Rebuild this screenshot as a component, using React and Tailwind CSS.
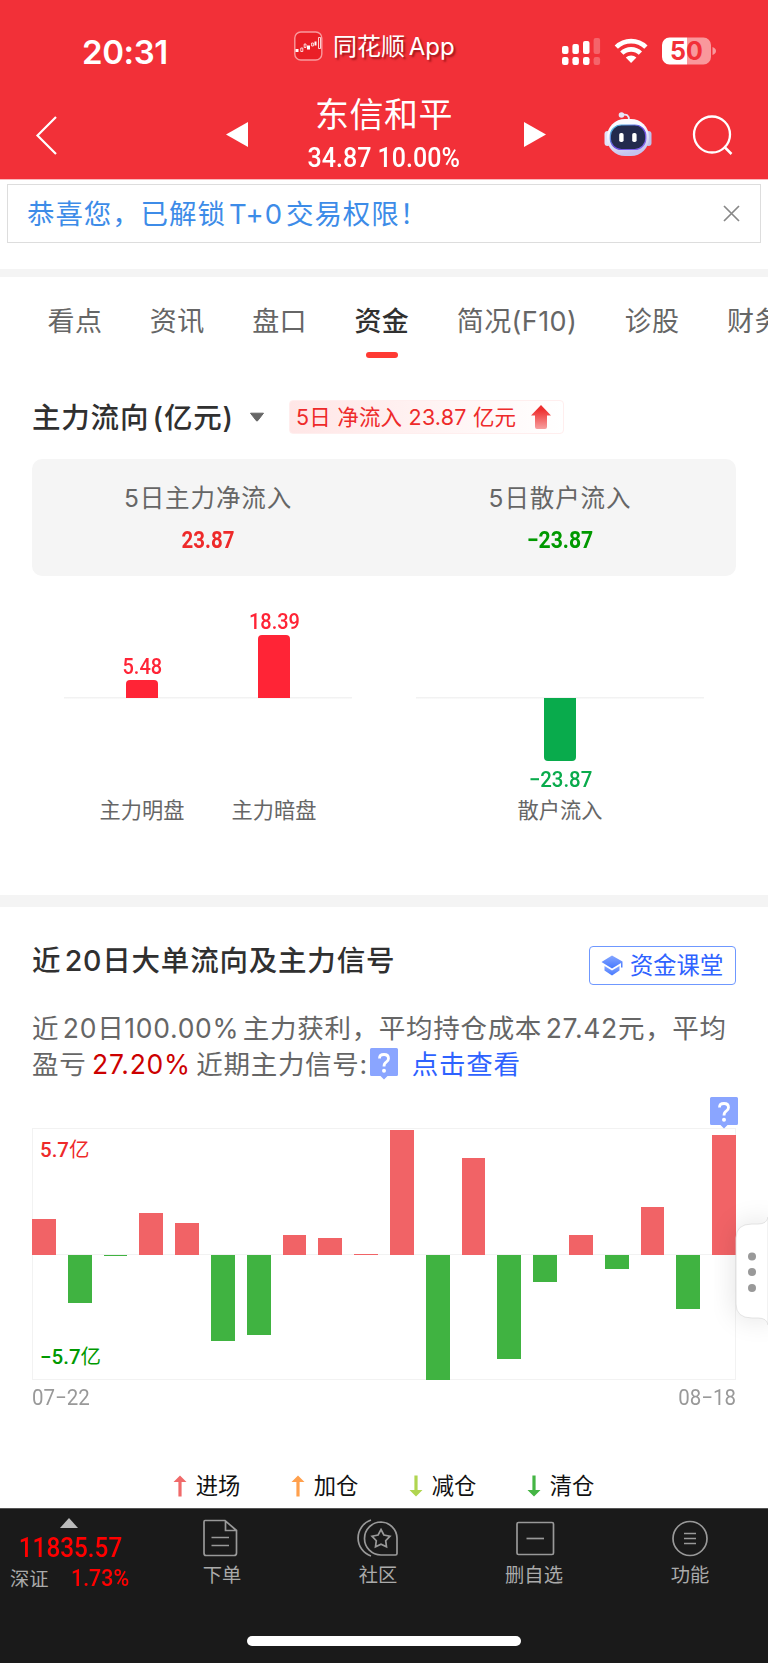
import React, { useState } from 'react';

const tabs = ['看点', '资讯', '盘口', '资金', '简况(F10)', '诊股', '财务'];

// height in px from the zero line, negative = outflow
const flows = [
    35.5, -48.5, -1, 41.5, 31.5, -86.5, -80.5, 20, 17, 0.6,
    125, -125.5, 96.5, -104, -27, 20, -14, 48, -54.5, 119.5,
];

const legend = [
    { label: '进场', color: '#f06a6a', up: true },
    { label: '加仓', color: '#ffa04d', up: true },
    { label: '减仓', color: '#b0d550', up: false },
    { label: '清仓', color: '#44b544', up: false },
];

const StatusBar = () => (
    <div className="flex h-[90px] items-start">
        <div className="w-[294px] pl-[82px] pt-[35px] text-[33px] font-semibold leading-[34px] tracking-[-0.4px]">20:31</div>
        <div className="flex w-[268px] items-center pt-[29px]">
            <svg width="29" height="30" viewBox="0 0 29 30" className="shrink-0">
                <rect x="0.8" y="1" width="27" height="28" rx="6" fill="#ea1f26" stroke="#f99a9d" strokeWidth="1.4" />
                <path d="M1.5 18h3v3h-3zM13 14.5h3v4h-3zM20.5 10.5h2v4h-2z" fill="#fff" />
                <path d="M6.8 17h2v3.5h-2zM10.2 13h1.8v3.5h-1.8zM17.6 12h1.8v3h-1.8zM24.5 6.5h2v11h-2z" fill="none" stroke="#fff" strokeWidth="0.8" />
            </svg>
            <span className="ml-[10px] mt-[3px] whitespace-nowrap text-[24px] leading-[30px] [text-shadow:2px_2px_2px_rgba(90,0,0,0.55)] [word-spacing:-3px]">
                同花顺 App
            </span>
        </div>
        <svg width="160" height="30" viewBox="0 0 160 30" className="mt-[36px]">
            <g fill="#fff">
                <rect x="0" y="10" width="6.5" height="8" rx="2" />
                <rect x="10.4" y="8" width="6.5" height="10" rx="2" />
                <rect x="21" y="5" width="6.5" height="13" rx="2" />
                <rect x="0" y="21" width="6.5" height="8" rx="2.2" />
                <rect x="10.4" y="21" width="6.5" height="8" rx="2.2" />
                <rect x="21" y="21" width="6.5" height="8" rx="2.2" />
                <rect x="31.6" y="2" width="6.5" height="16" rx="2" opacity="0.25" />
                <rect x="31.6" y="21" width="6.5" height="8" rx="2.2" opacity="0.25" />
            </g>
            <g fill="none" stroke="#fff" strokeWidth="4.6">
                <path d="M54.3 11.2 A21 21 0 0 1 83.9 11.2" />
                <path d="M59.8 17.2 A13.2 13.2 0 0 1 78.4 17.2" />
            </g>
            <path d="M69.1 27 L63.8 21.6 A8 8 0 0 1 74.4 21.6 Z" fill="#fff" />
            <path d="M108 1.5 h-0.5 a7.5 7.5 0 0 0 -7.5 7.5 v12 a7.5 7.5 0 0 0 7.5 7.500 H125 V1.5 Z" fill="#fff" />
            <path d="M125 1.5 h16.5 a7.5 7.5 0 0 1 7.5 7.5 v12 a7.5 7.5 0 0 1 -7.5 7.5 H125 Z" fill="#f9989c" />
            <path d="M150.5 11 q3.5 1.5 3.5 4 q0 2.5 -3.5 4 Z" fill="#f9989c" />
            <text x="124.5" y="24" textAnchor="middle" fontFamily="Inter" fontWeight="700" fontSize="25" fill="#f23038">50</text>
        </svg>
    </div>
);

const Robot = () => (
    <svg width="48" height="46" viewBox="0 0 48 46">
        <defs>
            <linearGradient id="head" x1="0" y1="0" x2="0.3" y2="1">
                <stop offset="0.4" stopColor="#fafaff" />
                <stop offset="1" stopColor="#c4c4ee" />
            </linearGradient>
            <linearGradient id="rim" x1="0" y1="0" x2="1" y2="1">
                <stop offset="0" stopColor="#4fd0e0" />
                <stop offset="0.5" stopColor="#6a4be0" />
                <stop offset="1" stopColor="#8a6bf0" />
            </linearGradient>
        </defs>
        <path d="M18 4 Q25 2 25 9" fill="none" stroke="#e6e6f8" strokeWidth="1.8" />
        <circle cx="17.5" cy="4" r="2.8" fill="#e6e6f8" />
        <rect x="0.5" y="20" width="6" height="15" rx="3" fill="#e2e2f8" />
        <rect x="41.5" y="20" width="6" height="15" rx="3" fill="#c0c2ec" />
        <rect x="3" y="8" width="42" height="37" rx="18" fill="url(#head)" />
        <rect x="6.3" y="14" width="35.5" height="24.5" rx="11" fill="#232a4d" stroke="url(#rim)" strokeWidth="1.2" />
        <rect x="15.2" y="22" width="4.4" height="9" rx="1.8" fill="#fff" />
        <rect x="28.2" y="22" width="4.4" height="9" rx="1.8" fill="#fff" />
    </svg>
);

const Header = () => (
    <header className="h-[180px] border-b border-[#f9b9bc] bg-[#f23038] text-white">
        <StatusBar />
        <div className="flex h-[89px] items-start">
            <svg width="226" height="89" viewBox="0 0 226 89">
                <path d="M56 27 L37.5 45.5 L56 64" fill="none" stroke="#fff" strokeWidth="2.2" />
            </svg>
            <svg width="22" height="89" viewBox="0 0 22 89">
                <path d="M0 44.5 L22 32 V57 Z" fill="#fff" />
            </svg>
            <div className="flex w-[272px] flex-col items-center">
                <div className="mt-[3px] text-[34px] leading-[44px] tracking-[0.5px]">东信和平</div>
                <div className="mt-[5px] scale-x-[0.91] whitespace-nowrap font-['Roboto'] text-[27.5px] font-medium leading-[32px]">34.87 10.00%</div>
            </div>
            <svg width="22" height="89" viewBox="0 0 22 89" className="ml-[4px]">
                <path d="M22 44.5 L0 32 V57 Z" fill="#fff" />
            </svg>
            <div className="ml-[58px] mt-[21px]"><Robot /></div>
            <svg width="44" height="44" viewBox="0 0 44 44" className="ml-[38px] mt-[23px]">
                <circle cx="22" cy="21.5" r="18" fill="none" stroke="#fff" strokeWidth="2.3" />
                <path d="M34 33.5 L41.5 41" stroke="#fff" strokeWidth="2.5" />
            </svg>
        </div>
    </header>
);

const Caret = ({ className }) => (
    <svg width="16" height="11" viewBox="0 0 16 11" className={className}>
        <path d="M1.5 1.2 H14.5 L8.7 8.7 Q8 9.5 7.3 8.7 Z" fill="#666" stroke="#666" strokeLinejoin="round" />
    </svg>
);

const Ask = ({ className }) => (
    <svg width="28" height="32" viewBox="0 0 28 32" className={className}>
        <path d="M1.5 0 H26.5 Q28 0 28 1.5 V26.5 Q28 28 26.5 28 H17.5 L14 31.5 L10.5 28 H1.5 Q0 28 0 26.5 V1.5 Q0 0 1.5 0 Z" fill="#8aa5ff" />
        <path d="M9.5 10.5 Q9.5 6.5 14 6.5 Q18.5 6.5 18.5 10.5 Q18.5 12.7 16.2 14.2 Q14 15.6 14 18.5" fill="none" stroke="#fff" strokeWidth="2.8" />
        <circle cx="14" cy="22.7" r="2" fill="#fff" />
    </svg>
);

const Signal = ({ color, up }) => (
    <svg width="14" height="22" viewBox="0 0 14 22" className={up ? '' : 'rotate-180'}>
        <path d="M7 0.5 L13.5 7 H8.6 V21.5 H5.4 V7 H0.5 Z" fill={color} />
    </svg>
);

const SmallBar = ({ value, label, height, down }) => (
    <div className="flex w-[132px] flex-col items-center">
        <div className="flex h-[98px] flex-col items-center justify-end">
            {!down && (
                <>
                    <span className="scale-x-[0.93] font-['Roboto'] text-[21.5px] font-medium leading-[26px] text-[#ff2436]">{value}</span>
                    <div className="w-[32px] rounded-t-[4px] bg-[#ff2436]" style={{ height }} />
                </>
            )}
        </div>
        <div className="flex h-[96px] flex-col items-center">
            {down && (
                <>
                    <div className="w-[32px] rounded-b-[4px] bg-[#09ab4c]" style={{ height }} />
                    <span className="mt-[5px] scale-x-[0.95] whitespace-nowrap font-['Roboto'] text-[21.5px] font-medium leading-[27px] text-[#09ab4c]">{value}</span>
                </>
            )}
        </div>
        <div className="text-[21.2px] leading-[32px] text-[#666]">{label}</div>
    </div>
);

const MainFlow = () => (
    <section className="h-[537px] px-8 pt-[42px]">
        <div className="flex h-[34px] items-center">
            <h2 className="mt-[2px] w-[202px] whitespace-nowrap text-[28.5px] font-medium leading-[34px] tracking-[0.8px] text-[#303030] [word-spacing:-5px]">主力流向 (亿元)</h2>
            <Caret className="ml-[15px]" />
            <div className="ml-[24px] flex h-[34px] w-[275px] items-center rounded-[4px] border border-[#ffeeee] bg-gradient-to-r from-[#ffe6e6] to-white pl-[6px] text-[#ee2a2a]">
                <span className="w-[235px] whitespace-nowrap text-[21.5px] tracking-[0.2px]">5日 净流入 23.87 亿元</span>
                <svg width="20" height="24" viewBox="0 0 20 24">
                    <defs>
                        <linearGradient id="inflow" x1="0" y1="0" x2="0" y2="1">
                            <stop offset="0.2" stopColor="#ee3030" />
                            <stop offset="1" stopColor="#f7a0a0" />
                        </linearGradient>
                    </defs>
                    <path d="M10 0 L20 10.5 H16 V22 Q16 24 14 24 H6 Q4 24 4 22 V10.5 H0 Z" fill="url(#inflow)" />
                </svg>
            </div>
        </div>
        <div className="mt-[25px] grid h-[117px] grid-cols-2 rounded-[10px] bg-[#f5f5f5] pt-[22px] text-center">
            <div>
                <div className="text-[24.5px] leading-[34px] tracking-[0.9px] text-[#666]">5日主力净流入</div>
                <div className="mt-[10px] scale-x-[0.87] font-['Roboto'] text-[23.5px] font-bold leading-[30px] text-[#ee2a2a]">23.87</div>
            </div>
            <div>
                <div className="text-[24.5px] leading-[34px] tracking-[0.9px] text-[#666]">5日散户流入</div>
                <div className="mt-[10px] scale-x-[0.9] font-['Roboto'] text-[23.5px] font-bold leading-[30px] text-[#009900]">−23.87</div>
            </div>
        </div>
        <div className="mt-[24px] grid grid-cols-2">
            <div className="mx-8 flex justify-center bg-[linear-gradient(#f2f2f2,#f2f2f2)] bg-[length:100%_1.5px] bg-[position:0_97px] bg-no-repeat">
                <SmallBar value="5.48" label="主力明盘" height={18.5} />
                <SmallBar value="18.39" label="主力暗盘" height={63} />
            </div>
            <div className="mx-8 flex justify-center bg-[linear-gradient(#f2f2f2,#f2f2f2)] bg-[length:100%_1.5px] bg-[position:0_97px] bg-no-repeat">
                <SmallBar value="−23.87" label="散户流入" height={62.5} down />
            </div>
        </div>
    </section>
);

const FlowChart = () => (
    <div className="mt-[46px]">
        <div className="relative h-[252px] border border-[#f2f2f2]">
            <div className="-mx-px flex h-[251px] items-stretch justify-between">
                {flows.map((v, i) => (
                    <div key={i} className="flex w-[23.8px] flex-col">
                        <div className="flex h-[125.5px] flex-col justify-end">
                            {v > 0 && <div className="bg-[#f16366]" style={{ height: v }} />}
                        </div>
                        {v < 0 && <div className="bg-[#40b341]" style={{ height: -v }} />}
                    </div>
                ))}
            </div>
            <div className="absolute left-0 top-[125px] -z-10 h-px w-full bg-[#f2f2f2]" />
            <div className="absolute left-[7px] top-[6px] whitespace-nowrap text-[20.5px] leading-[30px] text-[#ee2a2a]">
                <span className="font-['Roboto'] font-medium">5.7</span>亿
            </div>
            <div className="absolute left-[7px] top-[213px] whitespace-nowrap text-[20.5px] leading-[30px] text-[#009900]">
                <span className="font-['Roboto'] font-medium">−5.7</span>亿
            </div>
            <Ask className="absolute -top-[32px] right-[-3px]" />
        </div>
        <div className="mt-[3px] flex justify-between font-['Roboto'] text-[22px] leading-[30px] text-[#999]">
            <span className="origin-left scale-x-[0.93]">07−22</span>
            <span className="origin-right scale-x-[0.93]">08−18</span>
        </div>
    </div>
);

const BigOrders = () => (
    <section className="h-[601px] px-8 pt-[39px]">
        <div className="flex h-[39px] justify-between">
            <h2 className="-mt-px whitespace-nowrap text-[28.5px] font-medium leading-[32px] tracking-[0.8px] text-[#303030] [word-spacing:-5px]">近 20日大单流向及主力信号</h2>
            <button className="flex w-[147px] items-center rounded-[4px] border-[1.5px] border-[#6f98ff] pl-[11px] text-[23.3px] text-[#2e62ff]">
                <svg width="22" height="21" viewBox="0 0 22 21" className="mr-[7px] shrink-0">
                    <defs>
                        <linearGradient id="cap" x1="0" y1="0" x2="0" y2="1">
                            <stop offset="0" stopColor="#86a6ff" />
                            <stop offset="1" stopColor="#4478ff" />
                        </linearGradient>
                    </defs>
                    <path d="M11 0.5 L21.5 6.5 V12.5 H20 V8 L11 13.5 L0.5 7 Z" fill="url(#cap)" />
                    <path d="M3.5 11 L11 15.5 L18.5 11 V15.5 L11 20.5 L3.5 15.5 Z" fill="url(#cap)" />
                </svg>
                <span className="mt-px whitespace-nowrap">资金课堂</span>
            </button>
        </div>
        <div className="mt-[26px] whitespace-nowrap text-[26.5px] leading-[35.5px] tracking-[0.7px] text-[#666]">
            <p className="[word-spacing:-4.5px]">近 20日100.00% 主力获利，平均持仓成本 27.42元，平均</p>
            <p className="flex [word-spacing:-2.5px]">
                <span>盈亏 <span className="text-[#cc0000]">27.20%</span> 近期主力信号:</span>
                <Ask className="ml-[2px] mt-px" />
                <span className="ml-[14px] text-[#2e62ff]">点击查看</span>
            </p>
        </div>
        <FlowChart />
        <div className="mt-[57px] flex justify-center pr-px">
            {legend.map((item) => (
                <div key={item.label} className="flex w-[118px] items-center justify-center text-[22.3px] leading-[32px] text-[#111]">
                    <Signal color={item.color} up={item.up} />
                    <span className="ml-[9px]">{item.label}</span>
                </div>
            ))}
        </div>
    </section>
);

// floating handle on the right edge
const SideHandle = () => (
    <svg width="100" height="200" viewBox="0 0 100 200" className="absolute right-0 top-[1171px]">
        <defs>
            <filter id="soft" x="-60%" y="-30%" width="220%" height="160%">
                <feGaussianBlur stdDeviation="14" />
            </filter>
        </defs>
        <path d="M104 46 Q100 53 92 53 H82 Q68 53 68 67 V133 Q68 147 82 147 H92 Q100 147 104 154 Z" fill="#000" opacity="0.12" filter="url(#soft)" />
        <path d="M100 46 Q99 53 90 53 H84 Q68 53 68 67 V133 Q68 147 84 147 H90 Q99 147 100 154 Z" fill="#fff" stroke="#ddd" strokeWidth="0.8" />
        <circle cx="84" cy="85.5" r="4" fill="#999" />
        <circle cx="84" cy="101" r="4" fill="#999" />
        <circle cx="84" cy="117" r="4" fill="#999" />
    </svg>
);

const NavItem = ({ label, children }) => (
    <div className="flex flex-1 flex-col items-center">
        <svg width="42" height="40" viewBox="0 0 42 40" fill="none" stroke="#999" strokeWidth="1.7">{children}</svg>
        <span className="mt-[2px] text-[19.3px] leading-[30px] text-[#aaa]">{label}</span>
    </div>
);

const BottomNav = () => (
    <nav className="h-[155px] border-t border-[#555] bg-[#1a1a1a]">
        <div className="flex h-[127px] pt-[9px]">
            <div className="w-[144px]">
                <svg width="18" height="10" viewBox="0 0 18 10" className="ml-[60px]">
                    <path d="M9 0 L18 10 H0 Z" fill="#bbb" />
                </svg>
                <div className="mt-[5px] w-[141px] scale-x-[0.9] text-center font-['Roboto'] text-[27px] font-medium leading-[30px] text-[#ff0000]">11835.57</div>
                <div className="mt-px flex items-center pl-[10px] leading-[30px]">
                    <span className="text-[19.3px] text-[#aaa]">深证</span>
                    <span className="ml-[22px] origin-left scale-x-[0.93] font-['Roboto'] text-[23px] font-medium text-[#ff0000]">1.73%</span>
                </div>
            </div>
            <NavItem label="下单">
                <path d="M4 2.5 H24 L35.500 12.5 V35 Q35.5 37.5 33 37.5 H5 Q3 37.5 3 35 V4 Q3 2.5 4 2.5 Z M24.5 2.5 V12.5 H35.5 M10.5 19.5 H28 M10.5 27.5 H28" />
            </NavItem>
            <NavItem label="社区">
                <path d="M24 4 A16.5 16.5 0 0 0 24 37 H38.5 Q40 37 40 35.5 V20 A16.5 16.5 0 0 0 24 4 Z" />
                <path d="M14 2 A19 19 0 0 0 14 38" />
                <path d="M24 11.5 L26.9 17 L33 18.2 L28.7 22.7 L29.5 28.8 L24 26.2 L18.5 28.8 L19.3 22.7 L15 18.2 L21.1 17 Z" />
            </NavItem>
            <NavItem label="删自选">
                <rect x="4" y="4.500" width="36.5" height="32" rx="1.5" />
                <path d="M13.5 20.5 H31" />
            </NavItem>
            <NavItem label="功能">
                <circle cx="21" cy="20.5" r="17" />
                <path d="M15 15.500 H27 M15 20.5 H27 M15 25.500 H27" />
            </NavItem>
        </div>
        <div className="mx-auto h-[10px] w-[274px] rounded-full bg-white" />
    </nav>
);

const App = () => {
    const [active, setActive] = useState('资金');
    const [notice, setNotice] = useState(true);

    return (
        <div className="relative isolate h-[1663px] w-[768px] overflow-hidden bg-white font-['Inter','Noto_Sans_CJK_SC',sans-serif]">
            <Header />
            <div className="h-[89px] px-[7px] pt-[4px]">
                {notice && (
                    <div className="flex h-[59px] items-center justify-between border border-[#ddd] pl-[19px] pr-[20px]">
                        <span className="mt-[2px] whitespace-nowrap text-[27.5px] tracking-[0.9px] text-[#3d8ce8] [word-spacing:-5.5px]">恭喜您，已解锁 T+0 交易权限！</span>
                        <svg width="17" height="17" viewBox="0 0 17 17" onClick={() => setNotice(false)}>
                            <path d="M1 1 L16 16 M16 1 L1 16" stroke="#888" strokeWidth="1.7" />
                        </svg>
                    </div>
                )}
            </div>
            <div className="h-[8px] bg-[#f4f4f4]" />
            <div className="flex h-[81px] gap-[47.5px] overflow-hidden pl-[47.5px] pt-[25px]">
                {tabs.map((tab) => (
                    <div key={tab} className="flex shrink-0 flex-col items-center" onClick={() => setActive(tab)}>
                        <span className={`whitespace-nowrap text-[27px] leading-[40px] tracking-[0.4px] ${active === tab ? 'font-medium text-[#303030]' : 'text-[#666]'}`}>{tab}</span>
                        {active === tab && <div className="mt-[10px] h-[6px] w-[32px] rounded-full bg-[#ff3a33]" />}
                    </div>
                ))}
            </div>
            <MainFlow />
            <div className="h-[12px] bg-[#f4f4f4]" />
            <BigOrders />
            <BottomNav />
            <SideHandle />
        </div>
    );
};

export default App;
